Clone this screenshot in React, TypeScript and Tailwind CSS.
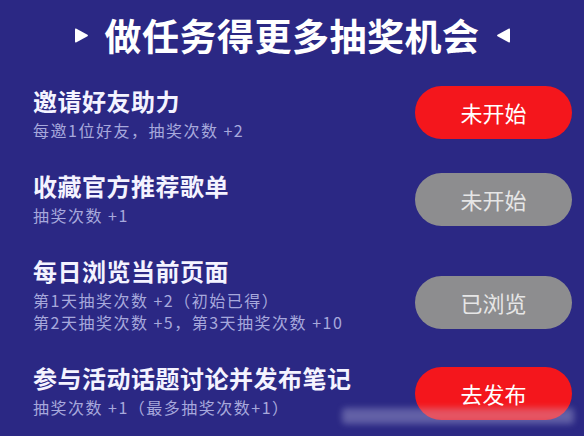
const tasks = [
  { title: '邀请好友助力', lines: ['每邀1位好友，抽奖次数 +2'], action: '未开始', tone: 'red', shift: '-translate-y-[2px]' },
  { title: '收藏官方推荐歌单', lines: ['抽奖次数 +1'], action: '未开始', tone: 'gray', shift: '' },
  {
    title: '每日浏览当前页面',
    lines: ['第1天抽奖次数 +2（初始已得）', '第2天抽奖次数 +5，第3天抽奖次数 +10'],
    action: '已浏览',
    tone: 'gray',
    shift: 'translate-y-[7px]',
  },
  { title: '参与活动话题讨论并发布笔记', lines: ['抽奖次数 +1（最多抽奖次数+1）'], action: '去发布', tone: 'red', shift: 'translate-y-[2px]' },
];

function Triangle({ dir }: { dir: 'right' | 'left' }) {
  return (
    <svg width="15" height="17" viewBox="0 0 15 17" className="shrink-0">
      {dir === 'right' ? (
        <path d="M2 1.5 Q1 1 1 2.5 L1 14.5 Q1 16 2.5 15.2 L13.5 9.3 Q14.5 8.5 13.5 7.7 Z" fill="#fff" />
      ) : (
        <path d="M13 1.5 Q14 1 14 2.5 L14 14.5 Q14 16 12.5 15.2 L1.5 9.3 Q0.5 8.5 1.5 7.7 Z" fill="#fff" />
      )}
    </svg>
  );
}

export default function App() {
  return (
    <div
      className="relative h-[436px] w-[584px] overflow-hidden bg-[#2b2884] text-white"
      style={{ fontFamily: '"Noto Sans CJK SC", "Noto Sans", sans-serif' }}
    >
      <div className="flex items-center justify-center pt-[13px]">
        <Triangle dir="right" />
        <h1 className="mx-[16px] text-[37px] font-bold leading-[44px] tracking-[0.5px] text-white">做任务得更多抽奖机会</h1>
        <Triangle dir="left" />
      </div>

      <ul className="mt-[30px] flex flex-col gap-[31px] pl-[33px] pr-[12px]">
        {tasks.map((t) => (
          <li key={t.title} className="flex items-center justify-between">
            <div className="flex flex-col">
              <div className="text-[24px] font-bold leading-[28px] tracking-[0.5px] text-[#f4f3ff]">{t.title}</div>
              <div className="mt-[4px] flex flex-col">
                {t.lines.map((l) => (
                  <span key={l} className="text-[16px] leading-[22px] tracking-[1.5px] text-[#a7a8dc]">
                    {l}
                  </span>
                ))}
              </div>
            </div>
            <button
              className={`flex h-[53px] w-[157px] shrink-0 items-center justify-center rounded-full text-[22px] ${t.shift} ${
                t.tone === 'red' ? 'bg-[#f4161c] text-white' : 'bg-[#8d8d8f] text-[#e6e6e6]'
              }`}
            >
              {t.action}
            </button>
          </li>
        ))}
      </ul>

      {/* blurred watermark over the bottom-right corner */}
      <div className="absolute left-[342px] top-[408px] h-[16px] w-[232px] rounded-sm bg-[#c9c9e6]/35 blur-[3px]" />
    </div>
  );
}
